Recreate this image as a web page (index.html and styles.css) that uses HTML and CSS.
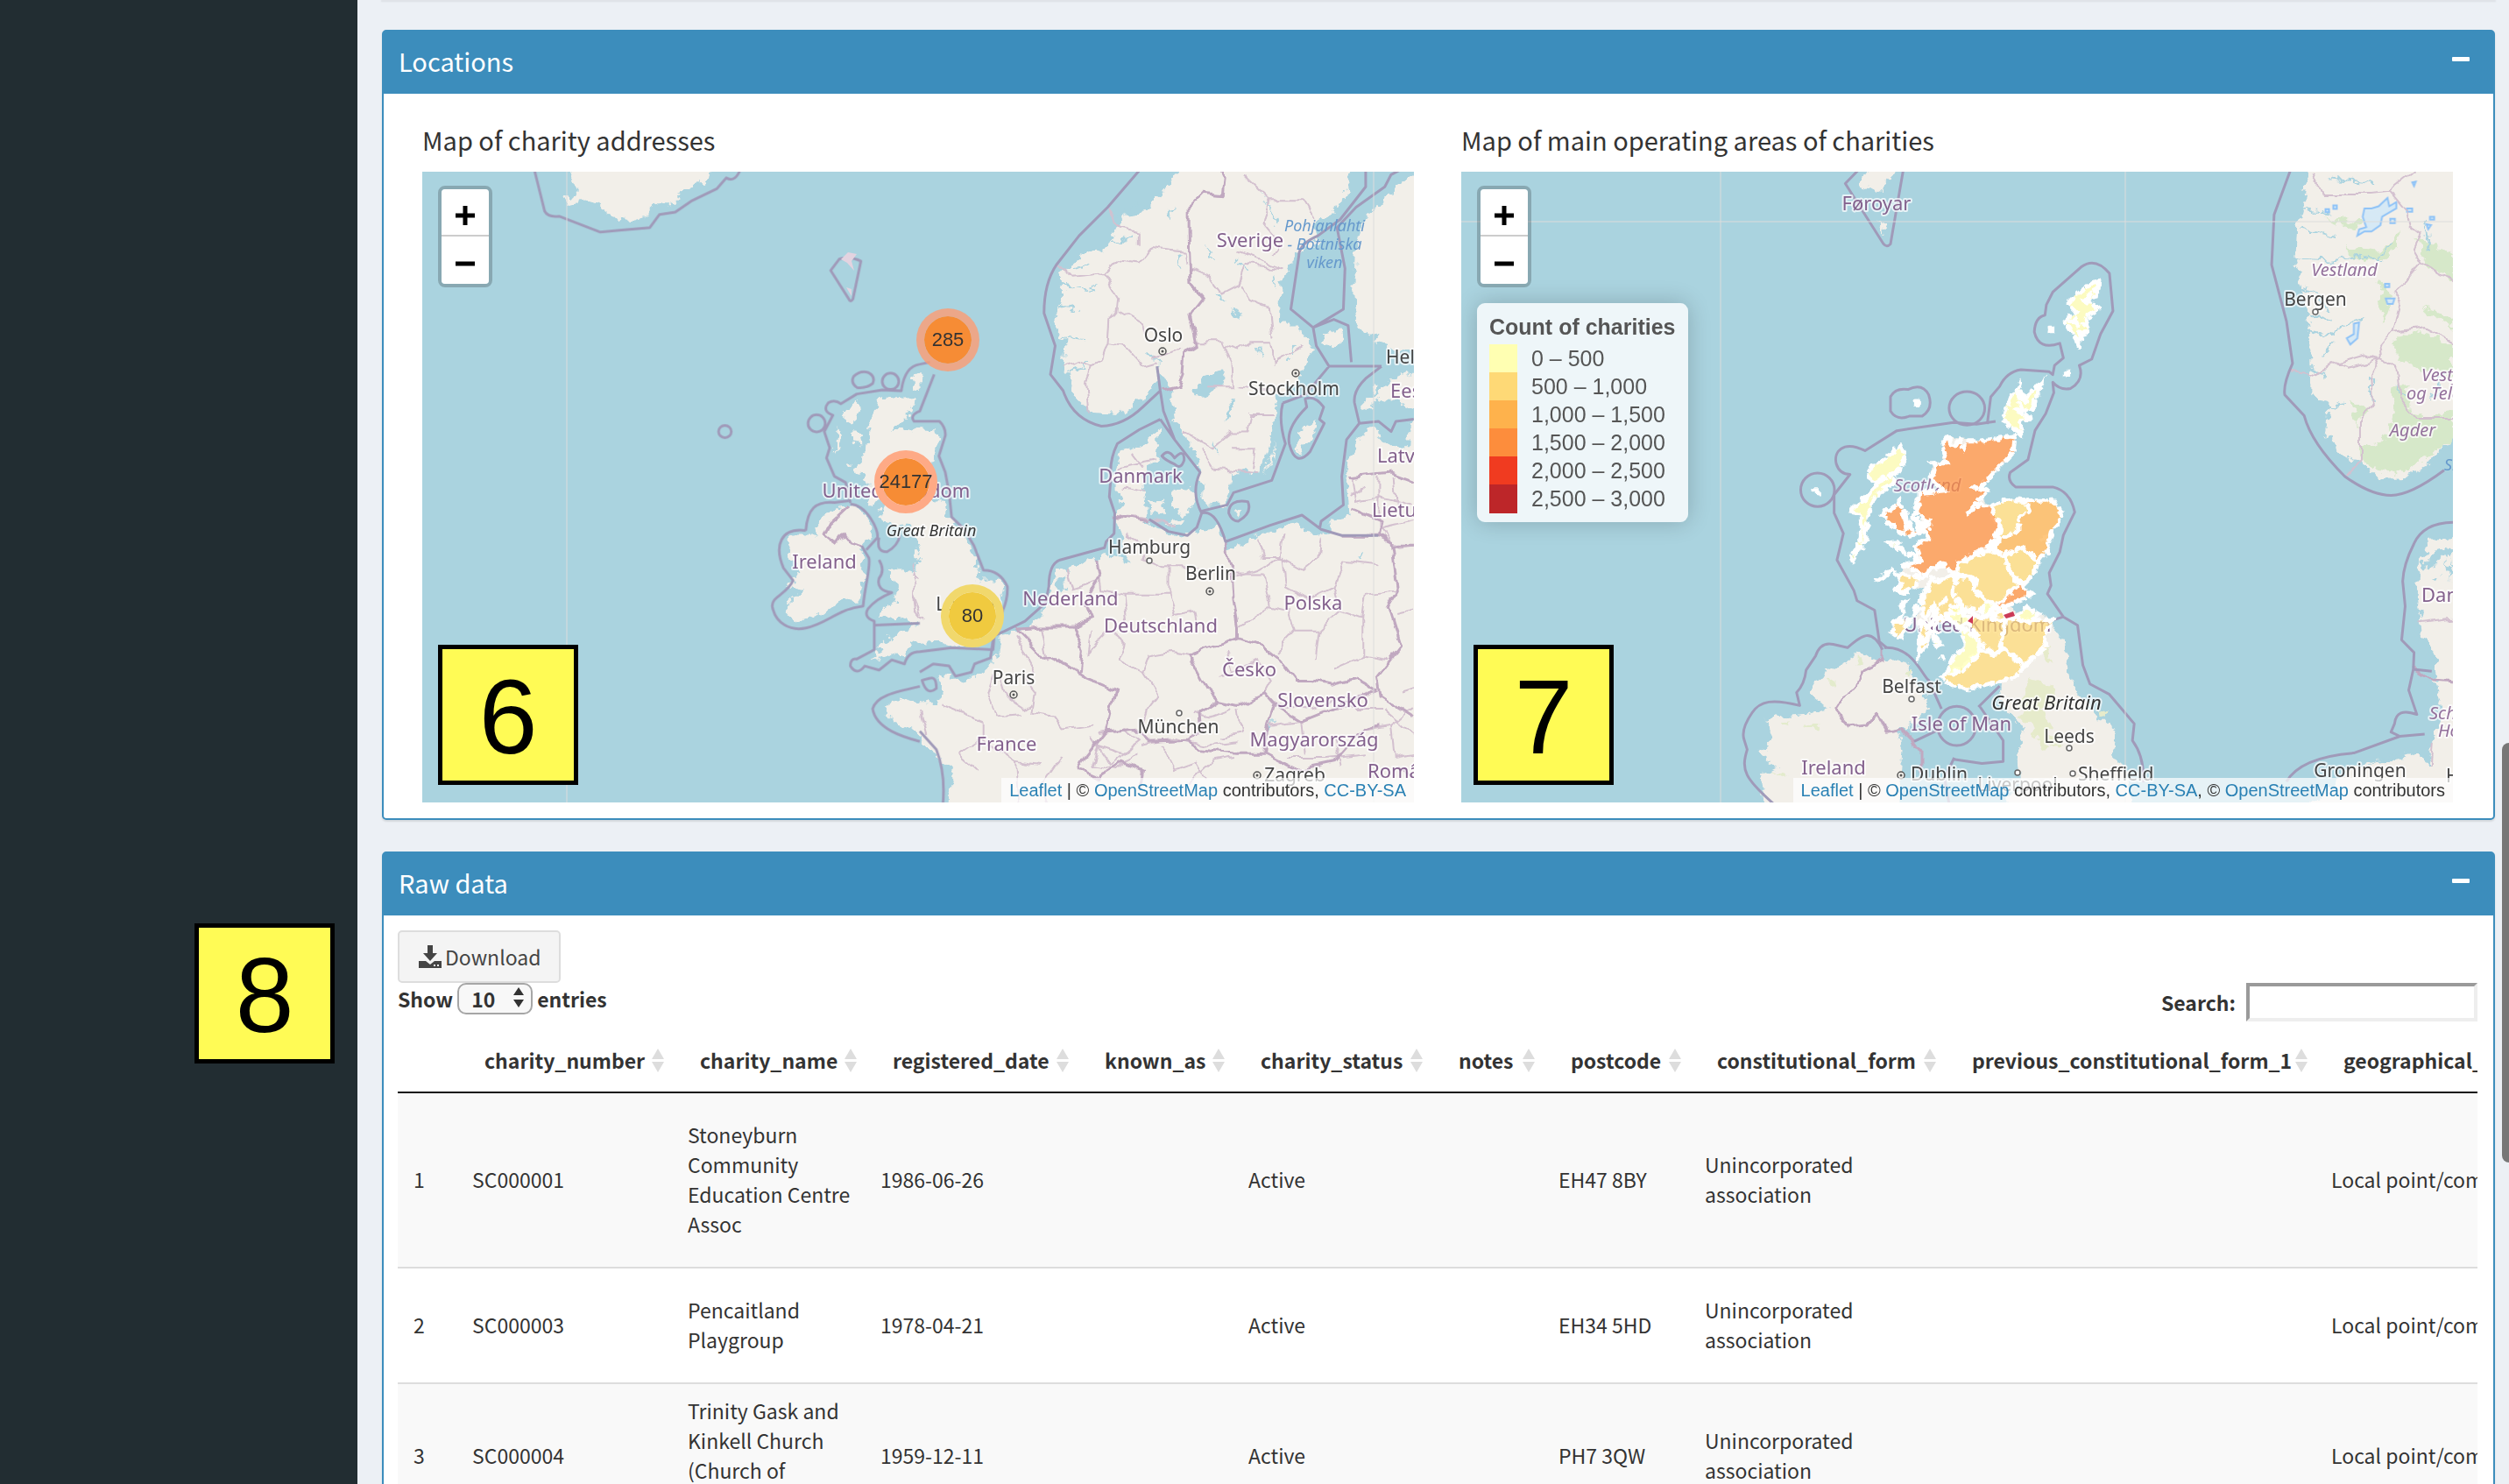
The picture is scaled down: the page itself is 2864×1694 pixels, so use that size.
FILE: index.html
```html
<!DOCTYPE html>
<html lang="en">
<head>
<meta charset="utf-8">
<title>Charity dashboard</title>
<link rel="stylesheet" href="styles.css">
</head>
<body>
<svg class="defs" width="0" height="0" aria-hidden="true">
  <defs>
    <filter id="coast" x="0" y="0" width="1132" height="720" filterUnits="userSpaceOnUse" color-interpolation-filters="sRGB">
      <feTurbulence type="fractalNoise" baseFrequency="0.09" numOctaves="3" seed="4" result="n"/>
      <feDisplacementMap in="SourceGraphic" in2="n" scale="16" xChannelSelector="R" yChannelSelector="G"/>
    </filter>
    <filter id="council" x="0" y="0" width="1132" height="720" filterUnits="userSpaceOnUse" color-interpolation-filters="sRGB">
      <feTurbulence type="fractalNoise" baseFrequency="0.12" numOctaves="2" seed="4" result="n"/>
      <feDisplacementMap in="SourceGraphic" in2="n" scale="8" xChannelSelector="R" yChannelSelector="G"/>
    </filter>
    <filter id="line" x="0" y="0" width="1132" height="720" filterUnits="userSpaceOnUse" color-interpolation-filters="sRGB">
      <feTurbulence type="fractalNoise" baseFrequency="0.05" numOctaves="2" seed="9" result="n"/>
      <feDisplacementMap in="SourceGraphic" in2="n" scale="12" xChannelSelector="R" yChannelSelector="G"/>
    </filter>
    <g id="city"><circle r="4" fill="#f2efe9" stroke="#555" stroke-width="1.5"/><circle r="1.5" fill="#555"/></g>
    <g id="town"><circle r="3" fill="#fff" stroke="#666" stroke-width="1.5"/></g>
    <g id="sort"><path d="M7 0L14 12H0zM0 15H14L7 27z"/></g>
  </defs>
</svg>
<div class="app">
  <aside class="sidebar"><span class="badge badge-8">8</span></aside>
  <main class="content">
    <div class="box-prev"></div>

    <section class="box">
      <header class="box-header">
        <h3>Locations</h3>
        <button class="collapse" type="button" aria-label="Collapse Locations"></button>
      </header>
      <div class="maps">
        <div class="map-col">
          <h4>Map of charity addresses</h4>
          <div class="map">
            <svg class="map-art" viewBox="0 0 1132 720" preserveAspectRatio="xMidYMid slice" aria-hidden="true">
              <rect class="sea" width="1132" height="720"/>
              <g filter="url(#coast)">
                <g transform="translate(-2 -6) scale(.3635 .4655)" class="land">
                  <path d="M465,-10L480,40 495,60 480,75 447,68 455,90 520,85 550,92 580,110 610,128 670,132 710,125 735,95 790,95 820,60 870,40 905,38 912,-10Z"/>
                  <path d="M1440,570L1555,565 1530,610 1480,650 1510,652 1568,643 1618,645 1628,670 1605,730 1580,770 1545,800 1600,815 1640,820 1655,860 1700,890 1730,940 1753,985 1743,1010 1768,1015 1818,1015 1832,1045 1823,1080 1803,1110 1818,1130 1793,1150 1748,1165 1658,1175 1628,1168 1568,1170 1540,1165 1520,1200 1480,1195 1440,1205 1410,1215 1440,1185 1480,1150 1560,1130 1568,1118 1530,1115 1500,1105 1440,1100 1450,1085 1490,1070 1500,1040 1480,1010 1470,985 1500,985 1550,1000 1568,960 1560,920 1540,880 1490,880 1440,865 1450,830 1475,780 1430,830 1400,830 1410,780 1370,745 1400,710 1410,650 1400,640 1430,610Z"/>
                  <path d="M1325,605L1375,578 1378,600 1350,630 1330,625ZM1308,645L1322,650 1315,680 1300,705ZM1350,650L1380,650 1385,680 1360,675ZM1540,520L1568,505 1570,545 1545,550ZM1330,740L1360,728 1350,742ZM1380,735L1400,720 1400,750Z"/>
                  <path d="M1230,880L1265,850 1330,835 1380,840 1415,880 1415,910 1385,935 1392,1000 1380,1060 1310,1065 1270,1090 1200,1115 1145,1100 1140,1080 1200,1040 1155,1030 1190,985 1150,955 1160,910 1240,910Z"/>
                </g>
                <g transform="translate(568 -6) scale(.3635 .4655)" class="land">
                  <path d="M-110,1325L-60,1305 0,1315 60,1315 75,1290 55,1245 95,1245 100,1265 165,1255 235,1220 250,1150 330,1135 385,1100 405,1050 430,990 490,985 550,960 600,955 645,965 640,930 615,860 640,830 615,790 615,740 630,700 690,690 755,640 750,690 740,720 700,750 705,800 710,860 700,875 760,885 790,910 870,895 920,885 955,910 965,940 1070,905 1180,875 1240,905 1290,900 1285,865 1350,860 1340,750 1370,670 1420,640 1480,690 1530,690 1535,620 1640,600V1700H80L95,1500 100,1475 80,1460 40,1440 10,1420 0,1395 -50,1370 -90,1365Z"/>
                  <path d="M1390,600L1390,575 1440,565 1480,525 1551,500 1640,500V620L1500,580 1450,570ZM1420,530L1450,540 1430,560ZM1640,-10L1551,20 1480,60 1400,130 1370,200 1365,300 1370,380 1390,400 1450,415 1430,430 1551,460 1640,440Z"/>
                  <path d="M850,-20L740,80 700,110 640,120 590,200 510,215 470,240 440,270 440,330 425,380 455,430 450,500 480,520 475,555 540,605 620,610 700,570 745,520 745,480 770,530 790,560 800,620 850,680 880,740 890,830 960,825 985,750 1070,750 1100,680 1120,600 1115,560 1190,520 1235,450 1210,420 1190,390 1130,390 1135,280 1170,220 1250,180 1240,140 1330,90 1370,-20Z"/>
                  <path d="M790,795L850,780 865,820 830,860 795,830ZM720,820L760,815 765,850 725,850ZM780,870L840,865 820,885ZM1180,690L1190,650 1250,620 1220,670 1190,705ZM1085,755L1120,680 1110,720ZM980,838L1010,845 1000,858ZM1260,415L1320,405 1330,430 1290,445Z"/>
                </g>
                <g transform="translate(568 -6) scale(.3635 .4655)" class="lake">
                  <path d="M865,550L890,515 950,505 950,530 930,550 880,565ZM955,635L970,590 992,560 980,600ZM980,350L1010,360 1000,380ZM1375,950L1390,945 1395,960ZM640,950L660,975 640,970ZM1080,1380L1110,1350 1090,1385ZM430,1010L450,1000 460,1030 440,1050ZM1070,60L1130,130 1125,135Z"/>
                  <path class="creek" d="M440,290L520,300 560,290M440,340L500,350M450,420L520,430M620,120L700,90M750,480L720,460M930,310L960,330M1000,230L1030,260M900,200L920,230M1100,270L1110,300M460,500L520,490M480,250L540,240M600,190L660,170M780,130L800,100M820,250L810,220M1060,440L1080,470M920,680L940,700M1180,440L1160,470"/>
                </g>
              </g>
              <g filter="url(#line)" fill="none">
                <g transform="translate(568 -6) scale(.3635 .4655)" class="region">
                  <path d="M440,235L480,270 580,262 620,232 690,240 730,200 830,210 835,235M580,262L625,320 620,355 595,380 590,430 640,435 700,490 745,480M625,355L700,390 720,420M450,490L490,475 540,490 570,480 590,430M540,490L520,530 530,600M590,100L630,150 690,160 690,195M820,450L730,470M960,440L1000,450 1040,430 1100,430 1110,480 1200,440M850,250L910,270 950,310 1000,290 1020,240 1140,250M1020,20L1100,80 1200,80 1240,130M1010,290L1040,330 1100,350 1110,420M860,430L950,430 980,480 985,540 900,540M1000,540L1100,550M830,650L920,690 980,650 1030,650 1040,610 1120,610M880,690L920,740 1060,750M980,690L1050,690 1040,740M620,740L740,720M970,1000L1080,1000M1100,80L1080,140 1130,190 1110,215M1000,210L1140,250"/>
                  <path d="M620,855L720,865 800,880M650,905L720,935 700,960 760,980 870,980M560,985L570,1040 640,1050 650,1120M460,985L480,1040 560,1020M640,1050L780,1050 780,980M780,1050L800,1100 860,1090 870,1140M540,1140L530,1190 590,1140 640,1170 620,1210 700,1240 720,1200 790,1190 850,1200M700,1240L750,1300 720,1330 700,1380M380,1130L400,1210M300,1150L360,1240 330,1260 360,1290 350,1340 420,1350 450,1380 540,1370M250,1250L270,1300 330,1330 350,1320M230,1240L210,1290 240,1350 320,1345M70,1320L200,1360 200,1400 120,1440M0,1330L20,1390M190,1400L300,1460 310,1568M300,1460L380,1470M440,1450L380,1520 400,1568M120,1440L180,1480M560,1390L640,1380 690,1410 640,1440 560,1420 540,1470 620,1480 680,1440M540,1400L600,1470 660,1430"/>
                  <path d="M980,1010L1060,990 1130,960 1140,900M1060,910L1080,960 1130,960 1200,990 1250,960 1260,910M1140,960L1150,1030 1220,1060 1300,1030 1330,970 1440,980M1300,1030L1320,1090 1390,1110 1400,1050 1500,1040M1080,1000L1100,1080 1000,1130M1100,1080L1160,1090 1180,1140 1120,1190M1180,1140L1250,1140 1320,1090M1250,1140L1240,1210M1390,1110L1390,1200 1300,1230M1390,1200L1470,1210M960,1190L980,1240 940,1250M980,1240L1060,1210 1100,1260 1080,1290M1120,1320L1230,1330 1330,1300 1380,1310M1000,1330L1010,1390 950,1400M1100,1370L1200,1360 1300,1330 1450,1330M1200,1360L1210,1440M1300,1400L1320,1470M1150,1450L1280,1450 1400,1440M1400,1380L1480,1370 1551,1330M1480,1370L1490,1450 1551,1440M860,1340L910,1350 980,1330M700,1420L800,1400 900,1420 1000,1410M760,1420L800,1480 870,1460 900,1500M840,1520L920,1460 990,1450M1360,760L1370,820 1440,810 1551,830M1440,760L1440,890 1551,870M1350,810L1400,780M1490,760L1500,840M1450,890L1500,940 1551,935"/>
                  <path d="M-20,1050L0,1100M-20,1000L5,1010M660,700L700,740M640,790L710,800M1510,1290L1551,1280M1500,1100L1551,1090M1460,1330L1551,1390"/>
                </g>
                <g transform="translate(568 -6) scale(.3635 .4655)" class="border">
                  <path d="M930,-10L955,30 950,70 890,65 845,100 845,170 850,290 885,325 850,360 870,440 830,460 825,510 810,540 760,550M960,920L965,960 980,1000 985,1060 1000,1130 1000,1155 880,1190 845,1200 900,1280 940,1310 1000,1320 1080,1290 1115,1320M1000,1155L1080,1175 1120,1200 1180,1260 1230,1260 1290,1270 1370,1255 1440,1285M1440,905L1480,920 1500,1040 1470,1080 1510,1180 1440,1250 1450,1300 1551,1350M300,1135L380,1130 480,1130 510,1180 500,1250M555,960L565,1010 520,1070 540,1110 480,1130M300,1135L370,1190 430,1210 510,1250 615,1285 585,1385 520,1450 500,1480M585,1385L680,1380 720,1410 850,1405M940,1310L880,1340 885,1380 850,1405 870,1430 1000,1440 1080,1440M1080,1440L1090,1380 1115,1320 1200,1360 1440,1285M1080,1440L1180,1480 1300,1460 1390,1380 1440,1370M1350,760L1480,750 1551,770M1325,905L1440,905 1450,870 1360,840M1480,935L1551,935M610,855L720,870M500,1480L560,1500 640,1460 700,1480 690,1530M1500,1470L1551,1500"/>
                </g>
                <path class="border" d="M489,380L474,394 463,404 459,413 474,425 481,415 489,425 503,429"/>
                <path class="region" d="M560,448L566,470 560,480 562,500 570,510"/>
              </g>
              <g class="bound">
                <g transform="translate(-2 -6) scale(.3635 .4655)">
                  <path d="M355,0L390,110Q400,125 435,122L565,161Q640,155 720,150L750,118 800,112 850,85 930,55 960,28Q990,42 1008,0"/>
                  <path d="M1288,255L1315,227Q1350,220 1383,232L1358,325Q1350,335 1345,325Z"/>
                  <ellipse cx="956" cy="650" rx="20" ry="15"/><path d="M1360,515Q1380,500 1405,505Q1430,515 1420,532Q1400,545 1370,542Q1350,530 1360,515Z"/><ellipse cx="1476" cy="527" rx="26" ry="20"/><ellipse cx="1244" cy="630" rx="27" ry="21"/>
                  <path d="M1350,825L1335,775 1300,760 1275,715 1285,690 1268,650 1295,610Q1260,600 1280,580Q1300,570 1320,582L1370,558 1450,548 1510,550Q1520,490 1568,485L1600,480M1613,510L1568,600Q1535,610 1550,625L1630,625Q1650,640 1648,660L1628,710 1648,750 1660,800 1668,860 1708,890 1738,930 1768,990Q1820,990 1843,1030Q1845,1060 1828,1090L1803,1140 1798,1185 1668,1180 1568,1190Q1530,1190 1520,1220L1480,1210 1440,1235 1395,1225Q1370,1250 1350,1225Q1350,1205 1370,1208L1425,1185V1115Q1390,1105 1405,1085Q1430,1060 1480,1045 1430,1040 1440,1010 1460,990 1440,965 1470,960L1530,970Q1540,950 1500,905"/>
                  <path d="M1210,893C1130,885 1110,930 1140,985L1170,1015C1150,1050 1100,1055 1105,1080C1115,1120 1160,1140 1210,1132C1280,1120 1310,1085 1390,1078C1395,1030 1415,980 1408,960L1385,930M1210,893C1215,840 1240,820 1300,824L1345,820M1350,828C1400,830 1440,890 1435,910L1400,940M1440,910Q1430,945 1465,945Q1500,930 1505,905M1425,1125L1568,1120"/>
                  <path d="M1568,1275C1480,1290 1430,1300 1420,1330C1430,1380 1520,1400 1568,1410M1568,1385L1620,1430Q1650,1490 1640,1568M1568,1240L1610,1220 1660,1225 1680,1250 1730,1240 1740,1220 1790,1205 1800,1150M1575,1260Q1590,1300 1620,1280Q1620,1250 1600,1255Z"/>
                </g>
                <g transform="translate(568 -6) scale(.3635 .4655)">
                  <path d="M700,0L590,100 500,170 430,240C395,280 390,330 390,360L425,440 410,510 450,550Q480,620 570,637Q640,635 700,590L755,550M745,490L755,550 765,600 800,670 880,750Q850,800 885,850M755,620L690,645 620,680Q595,720 600,760L595,810 612,850 610,900 585,920 580,935 440,965Q405,975 405,1030L395,1070 330,1115 265,1140 235,1150M755,620L800,670M885,850L870,885 840,905 780,895 720,865M885,850Q930,840 960,920L1100,880 1200,855 1260,890 1325,905 1440,905M1140,580Q1125,620 1148,680L1105,770 985,800 965,830 885,845M1400,0V50L1320,130 1250,170Q1190,190 1190,220L1165,350 1235,395 1330,350 1335,250 1310,150 1370,100 1460,50 1480,20 1530,0M1235,395L1245,440 1285,490 1450,490M1285,490L1210,560 1140,580M1235,395L1300,375 1345,390 1355,480M1450,490L1400,520Q1360,550 1365,580L1380,630 1340,670 1325,760 1330,830 1260,870 1255,890M1380,630L1440,625 1480,650 1495,625 1551,620M970,850Q970,815 1030,822Q1045,850 1000,870Q980,870 970,850ZM1160,680Q1150,640 1215,590L1210,570Q1240,560 1268,590L1255,620 1270,630 1225,700Q1180,740 1160,680ZM760,710Q780,690 800,715Q830,690 830,720 820,745 800,730 770,720 760,710Z"/>
                </g>
              </g>
              <path d="M478,100L486,92 496,94 490,102 493,113 485,104ZM484,132L490,134 490,142Z" fill="#e3d3e0"/>
              <path d="M165,0V720M1086,0V720" class="tile"/>
              <g class="lbl country">
                <text x="945" y="86">Sverige</text><text x="820" y="355">Danmark</text><text x="740" y="495">Nederland</text><text x="843" y="526">Deutschland</text><text x="1017" y="500">Polska</text><text x="944" y="576">Česko</text><text x="1028" y="611">Slovensko</text><text x="667" y="661">France</text><text x="1018" y="656">Magyarország</text><text x="541" y="372">United Kingdom</text><text x="459" y="453">Ireland</text>
                <text x="1105" y="258" class="start">Eesti</text><text x="1090" y="332" class="start">Latvija</text><text x="1084" y="394" class="start">Lietuva</text><text x="1079" y="692" class="start">România</text>
              </g>
              <g class="lbl city">
                <text x="846" y="194">Oslo</text><text x="995" y="255">Stockholm</text><text x="830" y="436">Hamburg</text><text x="900" y="466">Berlin</text><text x="675" y="585">Paris</text><text x="863" y="641">München</text><text x="996" y="696">Zagreb</text><text x="624" y="501">London</text><text x="1100" y="219" class="start">Helsinki</text>
              </g>
              <g class="lbl island"><text x="581" y="416">Great Britain</text></g>
              <g class="lbl water"><text x="1030" y="68">Pohjanlahti</text><text x="1030" y="89">- Bottniska</text><text x="1030" y="110">viken</text></g>
              <use href="#city" x="845" y="205"/><use href="#city" x="997" y="230"/><use href="#town" x="830" y="444"/><use href="#city" x="899" y="479"/><use href="#city" x="675" y="597"/><use href="#town" x="864" y="618"/><use href="#city" x="953" y="689"/>
            </svg>
            <div class="zoom"><button type="button" aria-label="Zoom in"><svg width="22" height="22"><path d="M0 11H22M11 0V22"/></svg></button><button type="button" aria-label="Zoom out"><svg width="22" height="22"><path d="M0 11H22"/></svg></button></div>
            <button type="button" class="cluster c-285">285</button>
            <button type="button" class="cluster solid c-24177">24177</button>
            <button type="button" class="cluster yellow c-80">80</button>
            <span class="badge badge-6">6</span>
            <div class="attribution"><a href="#">Leaflet</a> | © <a href="#">OpenStreetMap</a> contributors, <a href="#">CC-BY-SA</a></div>
          </div>
        </div>

        <div class="map-col">
          <h4>Map of main operating areas of charities</h4>
          <div class="map">
            <svg class="map-art" viewBox="0 0 1132 720" preserveAspectRatio="xMidYMid slice" aria-hidden="true">
              <rect class="sea" width="1132" height="720"/>
              <g filter="url(#coast)">
                <g transform="translate(-8 -6) scale(.3635 .4655)" class="land">
                  <path d="M1280,1190L1320,1210 1420,1215 1440,1250 1490,1310 1480,1340 1440,1370 1390,1380 1410,1430 1390,1700H1000L960,1490 1010,1470 960,1440 1000,1400 970,1355 1100,1345 1180,1330 1120,1290 1170,1240ZM1290,20L1340,0 1390,10 1350,40 1345,65 1310,50 1270,45ZM1320,130L1345,145 1350,170Z"/>
                </g>
                <g transform="translate(562 -6) scale(.4043 .4783)" class="land">
                  <path d="M260,1080L310,1130 330,1200 350,1260 400,1310 465,1350 460,1380 440,1410 490,1430 520,1700H100L120,1540 190,1480 180,1400 200,1340 140,1290 130,1240 150,1100Z"/>
                  <path d="M1005,-20L990,80 970,140 965,230 990,290 995,350 1010,430 1010,550 1060,560 1050,640 1100,690 1150,710 1210,745 1270,740 1340,710 1460,600V-20ZM1460,880L1350,890 1320,940 1310,1030 1320,1110 1350,1150 1360,1220 1380,1300 1350,1380 1345,1430 1300,1400 1240,1410 1130,1430 980,1540 970,1700H1460Z"/>
                </g>
                <g transform="translate(562 -6) scale(.4043 .4783)" class="wood">
                  <path d="M1150,670L1210,660 1240,600 1230,530 1280,520 1290,590 1350,600 1410,580V650L1330,700 1260,735 1190,720 1150,700ZM1240,420L1290,390 1410,420V500L1300,480 1260,460ZM1100,190L1200,200 1270,150 1230,220 1150,230ZM1200,260L1210,380 1240,310ZM1300,170L1410,210V270L1340,240ZM1040,120L1150,130 1140,150ZM1320,330L1410,360V390ZM1120,560L1140,620 1170,580Z"/>
                </g>
                <g transform="translate(562 -6) scale(.4043 .4783)" fill="#e6ebcb">
                  <path d="M215,1225L280,1240 290,1290 250,1290 270,1340 310,1380 240,1390 220,1330 180,1310ZM240,1150L280,1140 270,1190ZM400,1290L440,1300 430,1320Z"/>
                </g>
                <g transform="translate(-8 -6) scale(.3635 .4655)" fill="#e3ebcc">
                  <path d="M1030,1365L1050,1360 1045,1380ZM1100,1370L1150,1365 1130,1380ZM980,1480L1040,1490 1050,1500ZM1270,1200L1290,1210 1270,1225ZM1170,1260L1200,1255 1190,1275ZM1420,1230L1440,1235 1425,1250Z"/>
                </g>
                <g transform="translate(562 -6) scale(.4043 .4783)" class="lake">
                  <path d="M1320,950L1360,920 1410,910V960L1380,930 1340,970ZM1305,1050L1330,1060 1325,1080ZM1340,1150L1360,1170 1355,1220 1340,1180ZM1390,930L1400,990 1410,940ZM1160,1430L1260,1400 1280,1410ZM1350,990L1370,970 1365,985Z"/>
                  <path class="creek" d="M970,100L1060,110M965,220L1060,225 1150,215 1220,230M985,290L1040,310 1060,350M1000,390L1060,400 1100,380 1160,360M1040,450L1070,420M1010,480L1050,500M1050,580L1110,560M1200,230L1230,180M980,150L1080,170M1180,500L1180,560M1060,30L1180,40M1250,520L1290,560M1330,130L1340,200M1380,500L1350,560M1000,350L1060,370"/>
                </g>
              </g>
              <g filter="url(#council)">
                <g transform="translate(392 64) scale(.3333 .3444)" class="land">
                  <path d="M490,695L610,705 720,690 715,745 640,820 600,865 630,870 600,900 640,920 690,900 855,903 880,940 875,970 845,1005 830,1070 800,1105 790,1140 750,1180 780,1215 700,1250 720,1275 760,1260 850,1300 820,1350 825,1390 750,1450 720,1490 640,1510 560,1530 490,1510 470,1490 480,1470 510,1420 550,1390 530,1320 500,1300 450,1310 420,1390 390,1415 400,1330 380,1300 420,1200 380,1190 320,1210 330,1150 345,1115 400,1080 380,1050 430,1030 390,950 390,880 480,870 430,830 435,780 475,770 470,720Z"/>
                  <path d="M325,905L340,960 360,1000 410,1010 360,1020 320,1010 265,955 300,930ZM330,720L345,770 310,820 290,860 240,890 215,960 210,1030 165,1105 190,1030 190,950 155,940 250,850 220,830 225,795 270,770ZM1005,170L1000,230 960,240 1010,270 960,300 970,345 945,350 940,400 930,370 890,310 930,280 905,250 940,215ZM700,575L735,520 745,570 810,515 780,600 740,610 770,635 740,640 740,680 690,650 680,630ZM305,1310L350,1300 330,1360 300,1340ZM440,1350L470,1380 450,1390Z"/>
                </g>
              </g>
              <g transform="translate(562 -6) scale(.4043 .4783)" class="glacier">
                <path d="M1160,100L1180,100 1200,95 1225,75 1230,95 1250,85 1250,100 1210,120 1205,140 1180,155 1160,155 1140,165 1145,150 1165,145 1155,120ZM1280,100H1295V108H1280ZM1072,93H1082V101H1072ZM1050,102H1060V109H1050ZM1335,138L1348,140 1340,150ZM1345,120H1357V127H1345ZM1220,315L1245,315 1240,328 1225,328ZM1130,375L1145,372 1140,410 1120,425 1110,410 1130,400ZM1295,38L1305,36 1300,47ZM1233,125H1246V135H1233ZM1218,280H1230V288H1218Z"/>
              </g>
              <g filter="url(#line)" fill="none">
                <g transform="translate(562 -6) scale(.4043 .4783)" class="region">
                  <path d="M1020,20L1040,65 1180,65 1230,60 1300,15M1230,60L1280,110 1290,140 1320,160 1300,200 1320,230 1280,270 1240,300 1260,330 1240,395 1205,430 1210,460 1110,480 1080,470M1320,230L1410,275M1240,395L1330,385 1410,420M1205,460L1180,500 1185,560 1150,610 1150,700 1110,740M1210,460L1250,480 1260,550 1310,600 1410,600M955,490L1010,500 1080,470 1160,450 1205,460M1310,1090L1410,1080M1350,1380L1345,1430"/>
                </g>
                <path class="border" d="M1087,566L1110,580 1132,582M481,545L481,557 457,569 450,590 434,599 425,613 443,634 461,632 472,618 485,639 501,636 515,650 525,664 525,687"/>
              </g>
              <g class="bound">
                <g transform="translate(-8 -6) scale(.3635 .4655)">
                  <path d="M1280,0L1228,42 1348,190Q1358,200 1370,190L1412,0M1370,565Q1385,542 1425,547Q1470,530 1490,560Q1505,595 1470,612L1430,612Q1390,625 1370,600Z"/>
                  <ellipse cx="1141" cy="793" rx="53" ry="41"/><ellipse cx="1610" cy="593" rx="56" ry="41"/><ellipse cx="1578" cy="1372" rx="60" ry="48"/>
                  <path d="M1700,625L1640,632 1568,628 1390,648 1290,697C1220,670 1190,700 1200,730Q1210,755 1243,755L1193,805V850L1222,900 1202,965 1255,1040 1265,1065 1320,1088 1335,1165 1358,1180"/>
                  <path d="M1345,1185C1310,1130 1280,1150 1235,1180L1190,1172Q1150,1165 1135,1200L1105,1235Q1100,1270 1075,1290L1085,1322C1000,1305 960,1310 935,1340Q900,1380 910,1405L920,1430C900,1480 910,1500 1010,1568M1350,1180C1440,1175 1470,1250 1490,1260L1530,1330M1444,1410L1525,1380M1555,1568L1540,1500 1570,1450"/>
                </g>
                <g transform="translate(562 -6) scale(.4043 .4783)">
                  <path d="M95,615L105,550 130,525Q150,490 190,485L270,490 280,497 285,475 310,457 300,422Q240,440 228,395Q230,360 258,355L262,330 280,300 360,240Q400,215 440,255L450,345 415,400 390,460 355,475Q370,510 330,530Q300,535 280,515L283,540 260,590 230,630 210,700 160,730Q150,750 175,765L280,765Q330,775 342,825L310,880 300,920 270,970 275,1000 265,1020 310,1075 350,1095 365,1190 385,1235 440,1260 510,1330 505,1370Q540,1410 535,1470M310,1075L270,1085M130,1240L70,1290M75,1290L140,1370 140,1420 80,1425 0,1415M955,0L905,115 898,235 940,370 957,470Q930,520 935,545L990,595Q1010,660 1105,740Q1180,785 1235,785Q1290,785 1385,725M1430,850Q1330,845 1300,900Q1270,950 1268,990L1275,1050 1265,1130 1300,1160 1298,1200 1285,1250 1308,1308Q1250,1290 1245,1330L1235,1350 1260,1360 1130,1400Q980,1410 940,1468M1298,1200L1350,1205M1260,1360L1330,1355"/>
                </g>
              </g>
              <path d="M0,57H1132M296,0V720M758,0V720" class="tile"/>
              <g class="lbl country">
                <text x="474" y="44">Føroyar</text><text x="571" y="638">Isle of Man</text><text x="425" y="688">Ireland</text><text x="589" y="525">United Kingdom</text><text x="1096" y="491" class="start">Danmark</text>
              </g>
              <g class="lbl county">
                <text x="532" y="365">Scotland</text><text x="1008" y="119">Vestland</text><text x="1096" y="239" class="start">Vestfold</text><text x="1079" y="260" class="start">og Telemark</text><text x="1086" y="302">Agder</text><text x="1105" y="625" class="start">Schleswig-</text><text x="1115" y="645" class="start">Holstein</text>
              </g>
              <g class="lbl water"><text x="1122" y="341" class="start">Skagerrak</text></g>
              <g class="lbl city">
                <text x="514" y="595">Belfast</text><text x="513" y="695" class="start">Dublin</text><text x="694" y="652">Leeds</text><text x="704" y="695" class="start">Sheffield</text><text x="635" y="707">Liverpool</text><text x="1026" y="691">Groningen</text><text x="975" y="153">Bergen</text><text x="1124" y="697" class="start">Hamburg</text>
              </g>
              <g class="lbl island big"><text x="668" y="614">Great Britain</text></g>
              <use href="#town" x="514" y="602"/><use href="#city" x="502" y="689"/><use href="#town" x="694" y="658"/><use href="#town" x="698" y="687"/><use href="#town" x="635" y="686"/><use href="#town" x="975" y="160"/>
              <g filter="url(#council)">
                <g transform="translate(392 64) scale(.3333 .3444)" class="area">
                  <path fill="#fed976" d="M640,920L690,900 755,905 770,940 735,960 735,1000 660,1040 675,990 640,960ZM745,1060L800,1105 790,1140 750,1180 715,1160 680,1085ZM640,1065L680,1085 715,1160 750,1180 700,1210 690,1245 630,1240 580,1200 590,1165 520,1150 530,1110ZM520,1155L580,1165 580,1200 630,1240 600,1270 540,1260 510,1210ZM515,1150L510,1210 540,1260 500,1290 450,1310 440,1250 410,1300 400,1260 430,1180ZM330,1150L400,1160 380,1190 320,1210ZM400,1310L425,1330 415,1390 390,1420ZM305,1310L350,1300 330,1360 300,1340ZM240,1170L300,1130 270,1160ZM690,1300L760,1300 850,1300 820,1350 825,1390 750,1450 720,1420 670,1395ZM550,1290L690,1300 670,1395 650,1415 610,1385ZM600,1400L650,1415 680,1395 720,1430 755,1450 720,1490 640,1510 560,1530 490,1510 470,1490 560,1440ZM815,1030L850,1015 840,1035ZM640,1260L690,1260 680,1300 650,1300Z"/>
                  <path fill="#feb24c" d="M755,905L855,903 880,940 875,970 845,1005 830,1070 800,1105 745,1060 680,1085 640,1055 735,1000 735,960 770,940Z"/>
                  <path fill="#ffffb2" d="M330,720L345,770 310,820 290,860 240,890 215,960 210,1030 165,1105 160,1090 190,1030 190,950 155,940 220,880 250,850 220,830 225,795 270,770ZM1005,170L1000,230 960,240 1010,270 960,300 970,345 945,350 940,400 930,370 890,310 930,280 905,250 940,215ZM700,575L735,520 745,570 810,515 780,600 740,610 770,635 740,640 740,680 690,650 680,630ZM530,1320L600,1370 590,1420 540,1470 480,1480 510,1420 550,1390ZM720,1290L760,1260 800,1280 770,1310ZM440,1350L470,1380 450,1390ZM620,1240L650,1250 630,1280 600,1270ZM500,1250L540,1260 560,1310 520,1320 490,1290ZM375,575H388V582H375ZM33,870H46V880H33ZM840,335H848V345H840ZM895,477H902V488H895ZM290,1045L325,1040 315,1065ZM330,1250L345,1240 335,1270Z"/>
                  <path fill="#fd8d3c" d="M490,695L510,725 530,705 545,735 560,705 610,705 720,690 715,745 640,820 600,865 570,862 630,870 600,900 555,945 600,920 635,920 670,985 640,1050 530,1110 515,1145 470,1120 400,1150 345,1115 400,1100 380,1050 430,1030 400,1000 430,980 390,950 390,880 480,870 430,830 450,800 435,780 490,780 470,720ZM325,905L340,960 360,1000 410,1010 360,1020 320,1010 265,955 300,930ZM735,1180L780,1215 700,1250 650,1260 700,1215Z"/>
                  <path class="strait" d="M265,955L290,920M345,940L350,990 380,940 390,1000 430,970M330,1060L345,1085 390,1080 370,1110 340,1120M385,900L370,960 430,1000M420,1150L440,1130 470,1110 490,1120M400,1220L440,1160 480,1165M370,1280L400,1230 420,1210M350,1320L390,1260M440,1290L490,1220M420,1320L460,1290 500,1300M480,1280L560,1270 600,1290 680,1270M310,1140L330,1180 310,1200 350,1210M470,1425H475M210,900L240,860M200,990L215,1030M275,860L305,850M250,840L310,815M440,1340L460,1340M310,1310L330,1290M395,1380L430,1340M910,310L960,320M930,300L950,380M960,240L1000,200M740,560L770,590M720,600L760,620M730,540L740,600"/>
                </g>
              </g>
              <path d="M619,506L630,502 632,507 622,510ZM578,513L584,507 584,516Z" fill="#cb3a57"/>
            </svg>
            <div class="zoom"><button type="button" aria-label="Zoom in"><svg width="22" height="22"><path d="M0 11H22M11 0V22"/></svg></button><button type="button" aria-label="Zoom out"><svg width="22" height="22"><path d="M0 11H22"/></svg></button></div>
            <div class="legend">
              <strong>Count of charities</strong>
              <ul>
                <li><i class="s1"></i>0 – 500</li>
                <li><i class="s2"></i>500 – 1,000</li>
                <li><i class="s3"></i>1,000 – 1,500</li>
                <li><i class="s4"></i>1,500 – 2,000</li>
                <li><i class="s5"></i>2,000 – 2,500</li>
                <li><i class="s6"></i>2,500 – 3,000</li>
              </ul>
            </div>
            <span class="badge badge-7">7</span>
            <div class="attribution"><a href="#">Leaflet</a> | © <a href="#">OpenStreetMap</a> contributors, <a href="#">CC-BY-SA</a>, © <a href="#">OpenStreetMap</a> contributors</div>
          </div>
        </div>
      </div>
    </section>

    <section class="box">
      <header class="box-header">
        <h3>Raw data</h3>
        <button class="collapse" type="button" aria-label="Collapse Raw data"></button>
      </header>
      <div class="data">
        <button class="download" type="button">
          <svg width="26" height="26" viewBox="0 0 26 26" aria-hidden="true"><path fill="#444" fill-rule="evenodd" d="M10 0H16V9H21L13 18L5 9H10zM0 18H8L13 22L18 18H26V26H0zM17 22V24H19V22zM21 22V24H23V22z"/></svg>
          Download
        </button>
        <div class="controls">
          <label class="length">Show
            <span class="select"><select><option>10</option><option>25</option><option>50</option></select><svg width="12" height="24" aria-hidden="true"><path d="M6 0L12 9H0zM0 14H12L6 23z"/></svg></span>
            entries</label>
          <label class="search">Search: <input type="search"></label>
        </div>
        <div class="scroller">
          <table>
            <colgroup><col class="w-idx"><col class="w-num"><col class="w-name"><col class="w-date"><col class="w-known"><col class="w-status"><col class="w-notes"><col class="w-post"><col class="w-form"><col class="w-prev"><col class="w-geo"></colgroup>
            <thead>
              <tr>
                <th></th>
                <th><div>charity_number<svg><use href="#sort"/></svg></div></th>
                <th><div>charity_name<svg><use href="#sort"/></svg></div></th>
                <th><div>registered_date<svg><use href="#sort"/></svg></div></th>
                <th><div>known_as<svg><use href="#sort"/></svg></div></th>
                <th><div>charity_status<svg><use href="#sort"/></svg></div></th>
                <th><div>notes<svg><use href="#sort"/></svg></div></th>
                <th><div>postcode<svg><use href="#sort"/></svg></div></th>
                <th><div>constitutional_form<svg><use href="#sort"/></svg></div></th>
                <th><div>previous_constitutional_form_1<svg><use href="#sort"/></svg></div></th>
                <th><div>geographical_spread<svg><use href="#sort"/></svg></div></th>
              </tr>
            </thead>
            <tbody>
              <tr class="lines-5"><td>1</td><td>SC000001</td><td>Stoneyburn Community Education Centre Assoc</td><td>1986-06-26</td><td></td><td>Active</td><td></td><td>EH47 8BY</td><td>Unincorporated association</td><td></td><td>Local point/community</td></tr>
              <tr class="lines-3"><td>2</td><td>SC000003</td><td>Pencaitland Playgroup</td><td>1978-04-21</td><td></td><td>Active</td><td></td><td>EH34 5HD</td><td>Unincorporated association</td><td></td><td>Local point/community</td></tr>
              <tr><td>3</td><td>SC000004</td><td>Trinity Gask and Kinkell Church (Church of Scotland)</td><td>1959-12-11</td><td></td><td>Active</td><td></td><td>PH7 3QW</td><td>Unincorporated association</td><td></td><td>Local point/community</td></tr>
            </tbody>
          </table>
        </div>
      </div>
    </section>
  </main>
  <div class="thumb"></div>
</div>
</body>
</html>
```
FILE: styles.css
```css
* { box-sizing: border-box; }
body {
  margin: 0;
  font-family: "Noto Sans CJK SC", "Open Sans", sans-serif;
  font-size: 23px;
  line-height: 34px;
  color: #333;
  background: #ecf0f5;
}
.defs { position: absolute; }
h3, h4 { margin: 0; font-weight: 400; font-size: 29px; line-height: 36px; }
button, input, select { font: inherit; color: inherit; }
a { color: #2a81b4; text-decoration: none; }

.app { position: relative; display: flex; height: 100vh; overflow: hidden; }
.sidebar { position: relative; flex: 0 0 408px; background: #222d32; }
.content { flex: 1; min-width: 0; padding: 0 16px 0 28px; }
.thumb { position: absolute; right: 0; top: 848px; width: 8px; height: 479px; border-radius: 8px 0 0 8px; background: #777; }

.box-prev { height: 0; margin-bottom: 34px; box-shadow: 0 1px 2px 1px rgba(0, 0, 0, .08); }
.box {
  margin-bottom: 36px;
  border: 2px solid #3c8dbc;
  border-radius: 5px;
  background: #fff;
  box-shadow: 0 2px 2px rgba(0, 0, 0, .1);
}
.box-header {
  display: flex;
  justify-content: space-between;
  align-items: center;
  height: 71px;
  padding: 0 27px 6px 17px;
  background: #3c8dbc;
  color: #fff;
}
.collapse { width: 20px; height: 5px; margin-bottom: 2px; padding: 0; border: 0; border-radius: 1px; background: #fff; }

.maps { display: grid; grid-template-columns: 1fr 1fr; gap: 54px; padding: 34px 46px 18px 44px; }
.map-col h4 { margin-bottom: 19px; }
.map { position: relative; height: 720px; overflow: hidden; font-family: "Liberation Sans", Arial, sans-serif; }
.map-art { display: block; width: 100%; height: 100%; }

.sea, .lake { fill: #aad3df; }
.land { fill: #f2efe9; }
.wood { fill: #d6e8c9; }
.glacier { fill: #d6e9f5; stroke: #8fc3f7; stroke-width: 2; }
.glacier path, .bound *, .region *, .border *, .area *, .creek { vector-effect: non-scaling-stroke; }
.creek { fill: none; stroke: #aad3df; stroke-width: 2; }
.region { fill: none; stroke: #d3c0cf; stroke-width: 2; }
.border { fill: none; stroke: #c0a8c0; stroke-width: 3; }
.bound { fill: none; stroke: #a09ab9; stroke-width: 3; stroke-linejoin: round; }
.tile { fill: none; stroke: #dcdcdc; stroke-width: 1; }
.area path { fill-opacity: .72; stroke: #fff; stroke-width: 5; stroke-dasharray: 9 6; stroke-linecap: round; }
.area .strait { fill: none; stroke-width: 5; }

.lbl { font-family: "Noto Sans", sans-serif; text-anchor: middle; paint-order: stroke; stroke: rgba(255, 255, 255, .7); stroke-width: 4; stroke-linejoin: round; }
.lbl .start { text-anchor: start; }
.country { font-size: 22px; fill: #83608d; }
.county { font-size: 20px; font-style: italic; fill: #94719c; }
.city { font-size: 21px; fill: #444; }
.island { font-size: 18px; font-style: italic; fill: #333; }
.big { font-size: 22px; }
.water { font-size: 18px; font-style: italic; fill: #6699cc; stroke: none; }

.zoom { position: absolute; left: 18px; top: 16px; border: 4px solid rgba(0, 0, 0, .2); border-radius: 8px; background-clip: padding-box; }
.zoom button { display: flex; align-items: center; justify-content: center; width: 54px; height: 54px; padding: 8px 0 0; border: 0; background: #fff; border-radius: 0 0 4px 4px; }
.zoom button:first-child { border-bottom: 2px solid #ccc; border-radius: 4px 4px 0 0; }
.zoom path { stroke: #000; stroke-width: 5; }

.cluster {
  position: absolute;
  width: 72px;
  height: 72px;
  padding: 0;
  border: 9px solid rgba(253, 156, 115, .8);
  border-radius: 50%;
  background: #f68c35;
  background-clip: padding-box;
  font-size: 22px;
  line-height: 54px;
  white-space: nowrap;
}
.cluster.solid { border-color: #feaa86; }
.cluster.yellow { border-color: #f1d86c; background-color: #f0ca3f; }
.c-285 { left: 564px; top: 156px; }
.c-24177 { left: 516px; top: 318px; display: flex; justify-content: center; }
.c-80 { left: 592px; top: 471px; }

.legend { position: absolute; left: 18px; top: 150px; padding: 11px 14px; border-radius: 9px; background: rgba(255, 255, 255, .8); box-shadow: 0 0 27px rgba(0, 0, 0, .2); color: #555; font-size: 25px; line-height: 32px; }
.legend strong { display: block; margin-bottom: 4px; }
.legend ul { margin: 0; padding: 0; list-style: none; }
.legend li { display: flex; gap: 16px; }
.legend i { width: 32px; height: 33px; margin-bottom: -1px; }
.s1 { background: #ffffb2; }
.s2 { background: #fed976; }
.s3 { background: #feb24c; }
.s4 { background: #fd8d3c; }
.s5 { background: #f03b20; }
.s6 { background: #bd2629; }

.attribution { position: absolute; right: 0; bottom: 0; padding: 0 9px; background: rgba(255, 255, 255, .7); font-size: 20px; line-height: 28px; white-space: nowrap; }

.badge { position: absolute; width: 160px; height: 160px; padding-top: 2px; border: 5px solid #000; background: #fffb55; color: #000; font: 120px/150px "Liberation Sans", Arial, sans-serif; text-align: center; }
.badge-6 { left: 18px; bottom: 20px; }
.badge-7 { left: 14px; bottom: 20px; }
.badge-8 { left: 222px; top: 1054px; }

.data { padding: 17px 18px 18px 16px; }
.download { display: flex; align-items: center; gap: 4px; height: 60px; padding: 0 21px 0 22px; border: 2px solid #ddd; border-radius: 5px; background: #f4f4f4; color: #444; }
.controls { display: flex; justify-content: space-between; align-items: flex-start; font-weight: 700; }
.length, .search { display: flex; align-items: center; gap: 5px; }
.search { gap: 12px; }
.select { position: relative; display: flex; }
.select select { appearance: none; width: 86px; height: 36px; padding: 0 14px; border: 2px solid #a6a6a6; border-radius: 10px; background: #f8f8f8; line-height: 30px; }
.select svg { position: absolute; right: 10px; top: 5px; fill: #333; }
.search input { width: 264px; height: 44px; border: 4px solid; border-color: #9a9a9a #eee #eee #9a9a9a; background: #fff; }

.scroller { margin-top: 11px; overflow: hidden; }
table { table-layout: fixed; width: 2600px; border-collapse: separate; border-spacing: 0; }
.w-idx { width: 67px; }
.w-num { width: 246px; }
.w-name { width: 220px; }
.w-date { width: 242px; }
.w-known { width: 178px; }
.w-status { width: 226px; }
.w-notes { width: 128px; }
.w-post { width: 167px; }
.w-form { width: 291px; }
.w-prev { width: 424px; }
.w-geo { width: 411px; }
th { padding: 16px 9px 19px 32px; border-bottom: 2px solid #111; text-align: left; }
th div { display: flex; justify-content: space-between; align-items: center; white-space: nowrap; }
th svg { flex: none; width: 14px; height: 27px; fill: #ddd; }
td { padding: 13px 10px 15px 18px; border-bottom: 2px solid #ddd; }
td:nth-child(11) { white-space: nowrap; }
tbody tr:nth-child(odd) { background: #f9f9f9; }
.lines-5 { height: 200px; }
.lines-3 { height: 132px; }
```
